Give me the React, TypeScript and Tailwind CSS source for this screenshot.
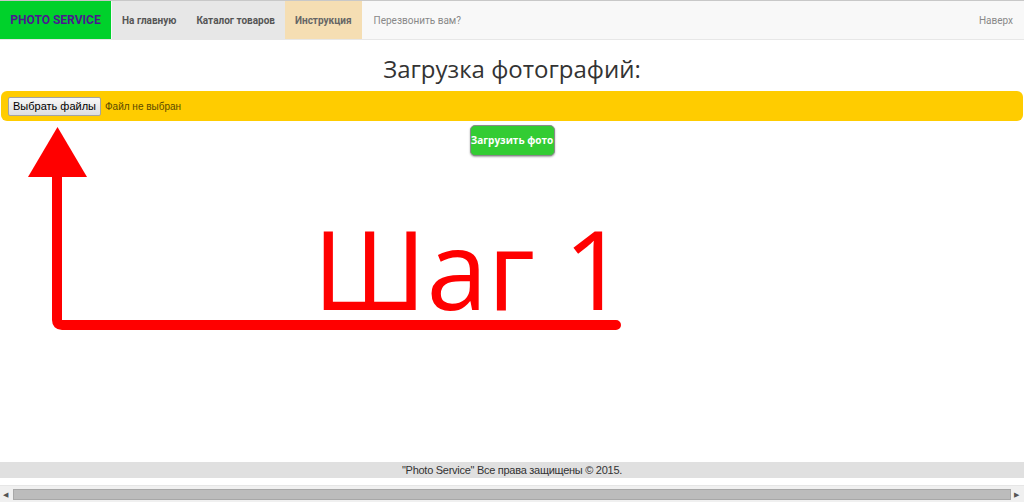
import React from 'react';

const NavItem: React.FC<{ label: string; className: string }> = ({ label, className }) => (
  <a href="#" className={`flex items-center h-full px-[10px] text-[10px] ${className}`}>
    {label}
  </a>
);

const StepArrow: React.FC = () => (
  <svg className="absolute left-0 top-0 pointer-events-none" width="1024" height="502" viewBox="0 0 1024 502">
    <polygon points="57.5,127 28,177 87,177" fill="#ff0000" />
    <path d="M57 176 L57 320 Q57 325 62 325 L616 325" fill="none" stroke="#ff0000" strokeWidth="10" strokeLinecap="round" strokeLinejoin="round" />
  </svg>
);

export default function App() {
  return (
    <div className="relative w-[1024px] h-[502px] bg-white flex flex-col overflow-hidden" style={{ fontFamily: '"Open Sans", sans-serif' }}>
      {/* navbar */}
      <nav className="h-[40px] border-t border-[#c8c8c8] border-b border-b-[#e7e7e7] bg-[#f8f8f8] flex items-stretch" style={{ fontFamily: 'Roboto, "Open Sans", sans-serif' }}>
        <a href="#" className="flex items-center w-[111px] justify-center bg-[#00d12b] text-[#4b1890] font-bold text-[12px]">
          PHOTO SERVICE
        </a>
        <NavItem label="На главную" className="bg-[#e7e7e7] text-[#555] font-bold ml-px" />
        <NavItem label="Каталог товаров" className="bg-[#e7e7e7] text-[#555] font-bold" />
        <NavItem label="Инструкция" className="bg-[#f5deb3] text-[#666] font-bold" />
        <NavItem label="Перезвонить вам?" className="text-[#888] pl-[12px]" />
        <div className="flex-1" />
        <a href="#" className="flex items-center pr-[11px] text-[10px] text-[#888]">Наверх</a>
      </nav>

      <h1 className="text-center text-[24px] text-[#333] leading-none mt-[17px]">Загрузка фотографий:</h1>

      <div className="mx-px mt-[10px] h-[30px] rounded-[6px] bg-[#ffcc00] flex items-center pl-[7px] gap-[4px]" style={{ fontFamily: '"Liberation Sans", Arial, sans-serif' }}>
        <button className="h-[19px] px-[4px] whitespace-nowrap border border-[#a3a3a3] rounded-[2px] bg-gradient-to-b from-[#f8f8f8] to-[#dedede] text-[11px] text-black leading-none">
          Выбрать файлы
        </button>
        <span className="text-[10px] text-[#5b4a00]">Файл не выбран</span>
      </div>

      <div className="flex justify-center mt-[4px]">
        <button className="w-[85px] h-[31px] rounded-[5px] bg-[#33cc33] border border-[#8a8a8a] shadow-[0_1px_2px_rgba(0,0,0,0.35)] text-white font-bold text-[10px]">
          Загрузить фото
        </button>
      </div>

      <div className="flex-1" />

      <footer className="h-[16px] bg-[#e0e0e0] flex items-center justify-center text-[11px] text-[#333] tracking-tight mb-[7px]" style={{ fontFamily: '"Liberation Sans", Arial, sans-serif' }}>
        "Photo Service" Все права защищены © 2015.
      </footer>

      {/* horizontal scrollbar */}
      <div className="h-[17px] bg-[#f0f0f0] border-t border-[#e6e6e6] flex items-center px-[3px] gap-[3px]">
        <span className="w-[7px] text-[7px] text-[#555] leading-none">◀</span>
        <div className="flex-1 h-[11px] bg-[#bcbcbc] border border-[#a8a8a8]" />
        <span className="w-[7px] text-[7px] text-[#555] leading-none">▶</span>
      </div>

      <StepArrow />
      <div className="absolute left-[313px] top-[212px] text-[#ff0000] text-[110px] leading-none whitespace-pre pointer-events-none">
        Шаг 1
      </div>
    </div>
  );
}
